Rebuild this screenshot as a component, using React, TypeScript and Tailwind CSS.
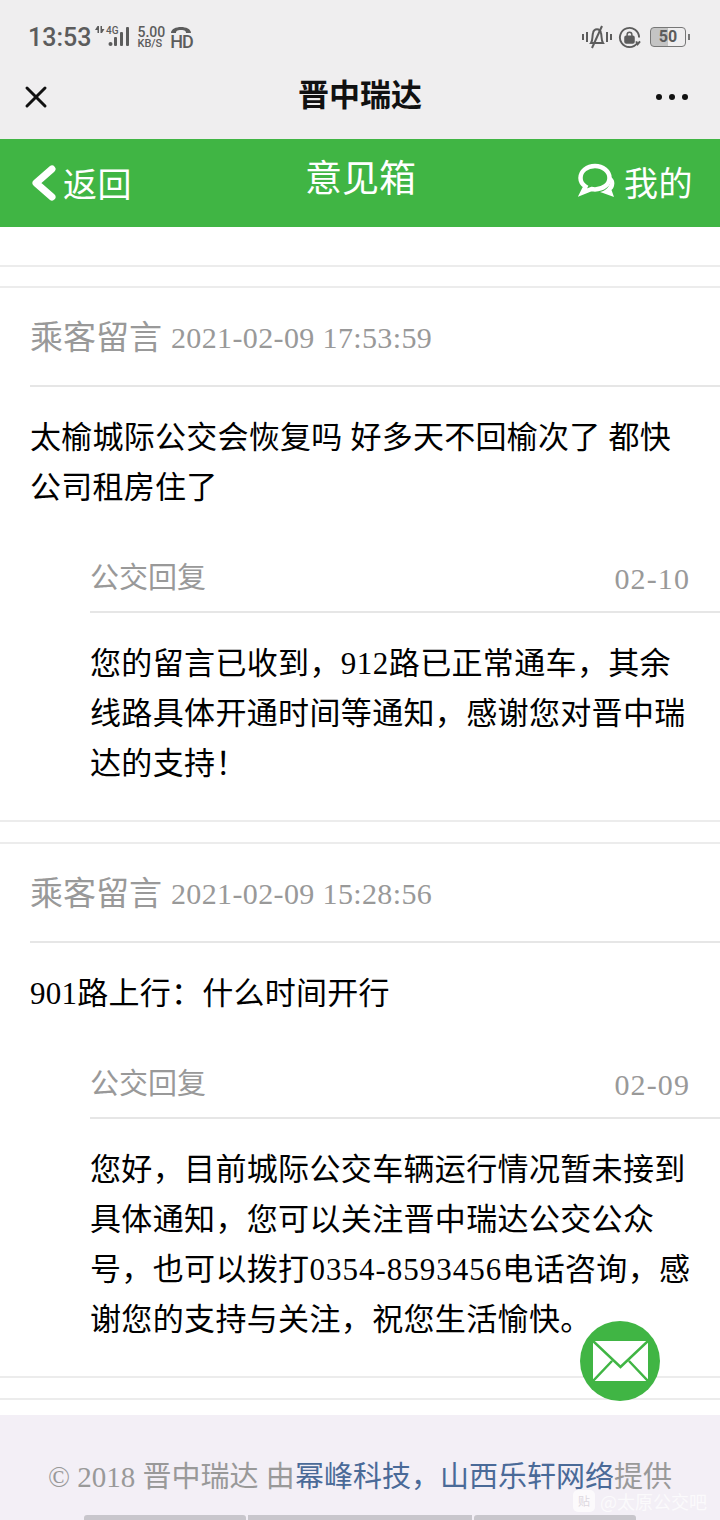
import { X } from "lucide-react"

const cjk = "font-['Liberation_Serif','Noto_Sans_CJK_SC',serif]"

const posts = [
  {
    time: "2021-02-09 17:53:59",
    body: "太榆城际公交会恢复吗 好多天不回榆次了 都快公司租房住了",
    day: "02-10",
    reply: [
      <>您的留言已收到，<span className="tracking-[0.5px]">912</span>路已正常通车，其余</>,
      <>线路具体开通时间等通知，感谢您对晋中瑞</>,
      <>达的支持！</>,
    ],
  },
  {
    time: "2021-02-09 15:28:56",
    body: "901路上行：什么时间开行",
    day: "02-09",
    reply: [
      <>您好，目前城际公交车辆运行情况暂未接到</>,
      <>具体通知，您可以关注晋中瑞达公交公众</>,
      <>号，也可以拨打<span className="tracking-[1px]">0354-8593456</span>电话咨询，感</>,
      <>谢您的支持与关注，祝您生活愉快。</>,
    ],
  },
]

function StatusBar() {
  return (
    <div className="h-[70px] flex items-center justify-between pl-[28px] pr-[30px] pt-[4px] text-[#5c5c5c] font-['Roboto',sans-serif]">
      <div className="flex items-center">
        <span className="text-[25px] font-medium leading-none">13:53</span>
        {/* data arrows, 4G, signal */}
        <svg width="36" height="24" viewBox="0 0 36 24" className="ml-[4px] -mt-[2px]" fill="currentColor">
          <path d="M2.500 2v7H4V2zM2.500 2L0 6h2.500zM5.500 2v7H7V2zM7 9l2.500-4H7z" />
          <circle cx="15.500" cy="20" r="2" />
          <rect x="19" y="13" width="3" height="9" rx="1" />
          <rect x="25" y="8" width="3" height="14" rx="1" />
          <rect x="31" y="3" width="3" height="19" rx="1" />
          <text x="11" y="10" fontSize="10" fontWeight="500">4G</text>
        </svg>
        <div className="ml-[6px] flex flex-col items-start text-[13px] leading-[12px] font-medium">
          <span className="text-[14px]">5.00</span>
          <span className="text-[11px] leading-[11px]">KB/S</span>
        </div>
        <div className="ml-[5px] flex flex-col items-center">
          <svg width="20" height="9" viewBox="0 0 20 9" fill="currentColor">
            <path d="M0 8C0 0 20 0 20 8l-5 0c0-2-1-3-5-3s-5 1-5 3z" />
          </svg>
          <span className="text-[18px] leading-[16px] font-medium tracking-[-1px]">HD</span>
        </div>
      </div>
      <div className="flex items-center">
        <svg width="30" height="24" viewBox="0 0 30 24" fill="none" stroke="currentColor" strokeWidth="2">
          <path d="M1 9v6M5 7v10M25 7v10M29 9v6" />
          <path d="M9 18c2-3 1-6 2-10 1-5 7-5 8 0 1 4 0 7 2 10z" />
          <path d="M20 1L10 23" />
        </svg>
        <svg width="23" height="23" viewBox="0 0 24 24" className="ml-[6px]" fill="none" stroke="currentColor" strokeWidth="2">
          <path d="M20 18A10 10 0 1 1 22 12" />
          <path d="M19 16l1.500 3 2.500-3" />
          <rect x="7.500" y="11" width="9" height="6.500" rx="1" fill="currentColor" />
          <path d="M9.500 11V9a2.500 2.500 0 0 1 5 0v2" strokeWidth="1.500" />
        </svg>
        <div className="ml-[9px] w-[36px] h-[20px] rounded-[4px] border border-[#777] bg-[linear-gradient(90deg,#c4c4c4_50%,#efeeef_50%)] flex items-center justify-center text-[16px] font-bold leading-none">
          50
        </div>
        <div className="ml-[2px] w-[2px] h-[6px] bg-[#777]" />
      </div>
    </div>
  )
}

function Post({ p }: { p: (typeof posts)[number] }) {
  return (
    <div className="h-[536px] border-t-2 border-b-2 border-[#ececec] pl-[30px] flex flex-col">
      <div className="h-[99px] border-b-2 border-[#e6e6e6] flex items-center pt-[3px] text-[#999] leading-none">
        <span className="text-[33px]">乘客留言</span>
        <span className="ml-[9px] text-[30px] tracking-[0.37px]">{p.time}</span>
      </div>
      <div className="mt-[26px] pr-[30px] text-[31px] leading-[50px] tracking-[0.25px] text-[#000]">{p.body}</div>
      <div className="mt-auto mb-[31px] pl-[60px]">
        <div className="h-[64px] border-b-2 border-[#e6e6e6] flex items-center justify-between pb-[3px] pr-[30px] text-[#999] leading-none">
          <span className="text-[29px]">公交回复</span>
          <span className="text-[30px] tracking-[1.1px]">{p.day}</span>
        </div>
        <div className="mt-[26px] text-[31px] leading-[50px] tracking-[0.35px] text-[#000]">
          {p.reply.map((line, i) => (
            <div key={i} className="whitespace-nowrap">{line}</div>
          ))}
        </div>
      </div>
    </div>
  )
}

export default function App() {
  return (
    <div className={`relative w-[720px] h-[1520px] overflow-hidden bg-white ${cjk}`}>
      <div className="bg-[#efeeef]">
        <StatusBar />
        <div className="h-[69px] flex items-center pl-[18px] pr-[32px] pb-[16px] text-[#111]">
          <div className="flex-1">
            <X size={36} strokeWidth={2} />
          </div>
          <span className="text-[31px] font-bold translate-x-[7px]">晋中瑞达</span>
          <div className="flex-1 flex justify-end gap-[7px]">
            <span className="w-[6px] h-[6px] rounded-full bg-[#111]" />
            <span className="w-[6px] h-[6px] rounded-full bg-[#111]" />
            <span className="w-[6px] h-[6px] rounded-full bg-[#111]" />
          </div>
        </div>
      </div>

      <div className="h-[88px] bg-[#40b544] flex items-center pl-[32px] pr-[27px] text-white">
        <div className="flex-1 flex items-center">
          <svg width="24" height="36" viewBox="0 0 24 36" fill="none" stroke="currentColor" strokeWidth="7" strokeLinecap="round" strokeLinejoin="round">
            <path d="M20 4L4 18l16 14" />
          </svg>
          <span className="ml-[7px] mt-[6px] text-[34px] leading-none tracking-[0.5px]">返回</span>
        </div>
        <span className="mb-[8px] text-[37px] leading-none -translate-x-[2px]">意见箱</span>
        <div className="flex-1 flex items-center justify-end">
          <svg width="40" height="38" viewBox="0 0 40 38" fill="none" stroke="currentColor" className="-mt-[2px]">
            <path d="M17 3C9 3 2.500 8 2.500 15c0 3.500 2 6.500 5 8.500l-3 6 9-3.500c1 .2 2.500 .4 3.500 .4 8 0 14.500-5 14.500-11.500S25 3 17 3z" strokeWidth="4.500" />
            <path d="M33 14c3 2 4 5 3 9-.5 2-1.500 3-2.500 4l2.500 7-11-4-3-1c5-1 11-5 11-15z" fill="currentColor" strokeWidth="0" />
          </svg>
          <span className="ml-[6px] mt-[4px] text-[34px] leading-none tracking-[0.5px]">我的</span>
        </div>
      </div>

      <div className="pt-[38px]">
        <div className="h-[21px] border-t-2 border-[#ececec]" />
        <Post p={posts[0]} />
        <div className="h-[20px]" />
        <Post p={posts[1]} />
        <div className="h-[20px]" />
        <div className="h-[17px] border-t-2 border-[#ececec]" />
      </div>

      <div className="h-[105px] bg-[#f3eff6] flex flex-col items-center pt-[48px] text-[29px] leading-none text-[#999]">
        <div className="whitespace-nowrap">
          © 2018 晋中瑞达 由<span className="text-[#4a6a98]">幂峰科技，山西乐轩网络</span>提供
        </div>
      </div>

      <div className="absolute left-[84px] bottom-0 flex gap-[2px]">
        <span className="w-[162px] h-[5px] rounded-t-[3px] bg-[#c8c6cc]" />
        <span className="w-[224px] h-[5px] bg-[#c8c6cc]" />
        <span className="w-[162px] h-[5px] rounded-t-[3px] bg-[#c8c6cc]" />
      </div>

      <div className="absolute left-[580px] top-[1321px] w-[80px] h-[80px] rounded-full bg-[#40b544] flex items-center justify-center">
        <svg width="55" height="40" viewBox="0 0 55 40" fill="none">
          <rect width="55" height="40" fill="white" />
          <path d="M-1 -1L27.500 26L56 -1M-1 41L19 20M56 41L36 20" stroke="#40b544" strokeWidth="2.500" />
        </svg>
      </div>

      <div className="absolute left-[573px] top-[1490px] flex items-center text-white/70 font-['Noto_Sans_CJK_SC',sans-serif] text-[18px] leading-none">
        <span className="w-[22px] h-[22px] rounded-[5px] bg-white/70 text-[12px] text-[#dcd8e0] flex items-center justify-center">贴</span>
        <span className="ml-[5px]">@太原公交吧</span>
      </div>
    </div>
  )
}
